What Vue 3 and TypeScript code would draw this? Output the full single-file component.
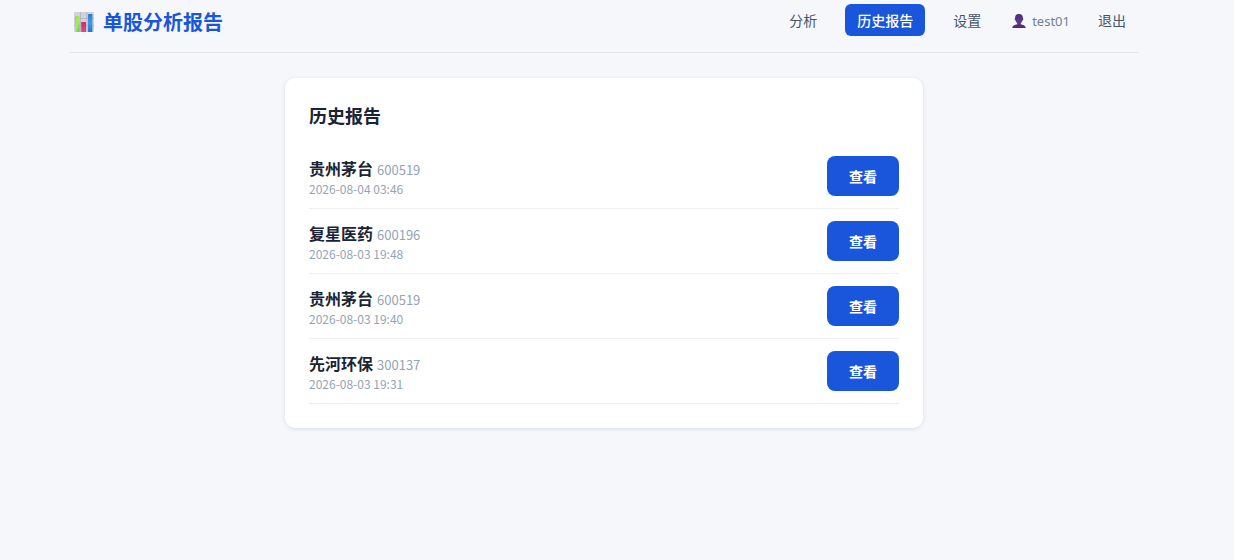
<script setup lang="ts">
interface Report {
  id: number
  name: string
  code: string
  time: string
}

const reports: Report[] = [
  { id: 4, name: '贵州茅台', code: '600519', time: '2026-08-04 03:46' },
  { id: 3, name: '复星医药', code: '600196', time: '2026-08-03 19:48' },
  { id: 2, name: '贵州茅台', code: '600519', time: '2026-08-03 19:40' },
  { id: 1, name: '先河环保', code: '300137', time: '2026-08-03 19:31' },
]
</script>

<template>
  <div class="page">
    <header class="topbar">
      <div class="brand">
        <svg class="brand-icon" viewBox="0 0 20 20" aria-hidden="true">
          <defs>
            <linearGradient id="bar-green" x1="0" y1="0" x2="1" y2="1">
              <stop offset="0" stop-color="#8fd84a" />
              <stop offset="0.5" stop-color="#a5ee62" />
              <stop offset="1" stop-color="#62bd58" />
            </linearGradient>
            <linearGradient id="bar-pink" x1="0" y1="0" x2="0" y2="1">
              <stop offset="0" stop-color="#c92e63" />
              <stop offset="1" stop-color="#f03d86" />
            </linearGradient>
            <linearGradient id="bar-blue" x1="0" y1="0" x2="0" y2="1">
              <stop offset="0" stop-color="#2b7fc9" />
              <stop offset="0.5" stop-color="#3b9bea" />
              <stop offset="1" stop-color="#2877c0" />
            </linearGradient>
          </defs>
          <rect width="20" height="20" rx="1" fill="#d5cfde" />
          <path d="M0 6.5H20M0 13.5H20M6.5 0V20M13 0V20" stroke="#b5aec2" stroke-width="0.8" />
          <rect x="1" y="4" width="4.6" height="16" rx="0.5" fill="url(#bar-green)" />
          <rect x="7.2" y="10" width="4.8" height="10" rx="0.5" fill="url(#bar-pink)" />
          <rect x="14" y="2" width="4.4" height="18" rx="0.5" fill="url(#bar-blue)" />
        </svg>
        <span>单股分析报告</span>
      </div>
      <nav class="nav">
        <a class="link" href="#analysis">分析</a>
        <a class="link active" href="#history" aria-current="page">历史报告</a>
        <a class="link" href="#settings">设置</a>
        <span class="user">
          <svg class="user-icon" viewBox="0 0 14 14" aria-hidden="true">
            <defs>
              <linearGradient id="bust" x1="0" y1="0" x2="0" y2="1">
                <stop offset="0" stop-color="#4c2d6b" />
                <stop offset="0.55" stop-color="#5a3b90" />
                <stop offset="1" stop-color="#4d2a75" />
              </linearGradient>
            </defs>
            <path
              d="M7 0C4.4 0 3.1 1.6 3.1 4C2.5 4.2 2.6 5.9 3.3 6.1C3.6 7.5 4.3 8.5 5.2 9V10.2C3.2 10.8 .7 11.2 .3 14H13.7C13.3 11.2 10.8 10.8 8.8 10.2V9C9.7 8.5 10.4 7.5 10.7 6.1C11.4 5.9 11.5 4.2 10.9 4C10.9 1.6 9.6 0 7 0Z"
              fill="url(#bust)"
            />
          </svg>
          test01
        </span>
        <a class="link" href="#logout">退出</a>
      </nav>
    </header>

    <main class="card">
      <h1 class="title">历史报告</h1>
      <ul class="list">
        <li v-for="report in reports" :key="report.id" class="row">
          <div class="info">
            <div class="stock">
              <strong class="name">{{ report.name }}</strong>
              <span class="code">{{ report.code }}</span>
            </div>
            <time class="time">{{ report.time }}</time>
          </div>
          <button class="view" type="button">查看</button>
        </li>
      </ul>
    </main>
  </div>
</template>

<style>
body {
  background: #f5f7fb;
}
</style>

<style scoped>
.page {
  padding: 0 26px 24px 0;
  font-family: "Noto Sans CJK SC", "Noto Sans", sans-serif;
  color: #1a2433;
}

.topbar {
  display: flex;
  align-items: center;
  justify-content: space-between;
  max-width: 1068px;
  margin: 0 auto 25px;
  padding: 4px 0 16px;
  border-bottom: 1px solid #dde6ef;
}

.brand {
  display: flex;
  align-items: center;
  gap: 9px;
  padding: 4px 0 0 4px;
  font-size: 20px;
  line-height: 28px;
  font-weight: 700;
  color: #1a56db;
}

.brand-icon {
  width: 20px;
  height: 20px;
}

.nav {
  display: flex;
  align-items: center;
  gap: 16px;
}

.link {
  padding: 6px 12px;
  border-radius: 6px;
  font-size: 14px;
  line-height: 20px;
  color: #475569;
  text-decoration: none;
}

.link.active {
  background: #1a56db;
  color: #fff;
  font-weight: 500;
}

.user {
  display: flex;
  align-items: center;
  gap: 6px;
  padding: 2px 0 0 3px;
  font-family: "Noto Sans", sans-serif;
  font-size: 13px;
  line-height: 20px;
  color: #718096;
}

.user-icon {
  width: 14px;
  height: 14px;
}

.card {
  box-sizing: border-box;
  max-width: 638px;
  margin: 0 auto;
  padding: 24px;
  border-radius: 10px;
  background: #fff;
  box-shadow: 0 1px 4px rgba(30, 41, 80, 0.12);
}

.title {
  margin: 0 0 16px;
  font-size: 18px;
  line-height: 26px;
  font-weight: 700;
}

.list {
  margin: 0;
  padding: 0;
  list-style: none;
}

.row {
  display: flex;
  align-items: center;
  justify-content: space-between;
  padding: 12px 0;
  border-bottom: 1px solid #edf0f3;
}

.stock {
  display: flex;
  align-items: baseline;
  gap: 4px;
  line-height: 24px;
}

.name {
  font-size: 16px;
  font-weight: 700;
}

.code {
  font-size: 13px;
  color: #94a3b8;
}

.time {
  display: block;
  font-size: 12px;
  line-height: 14px;
  color: #94a3b8;
}

.view {
  padding: 10px 22px;
  border: 0;
  border-radius: 8px;
  background: #1a56db;
  color: #fff;
  font-family: inherit;
  font-size: 14px;
  line-height: 20px;
  font-weight: 700;
  cursor: pointer;
}
</style>
